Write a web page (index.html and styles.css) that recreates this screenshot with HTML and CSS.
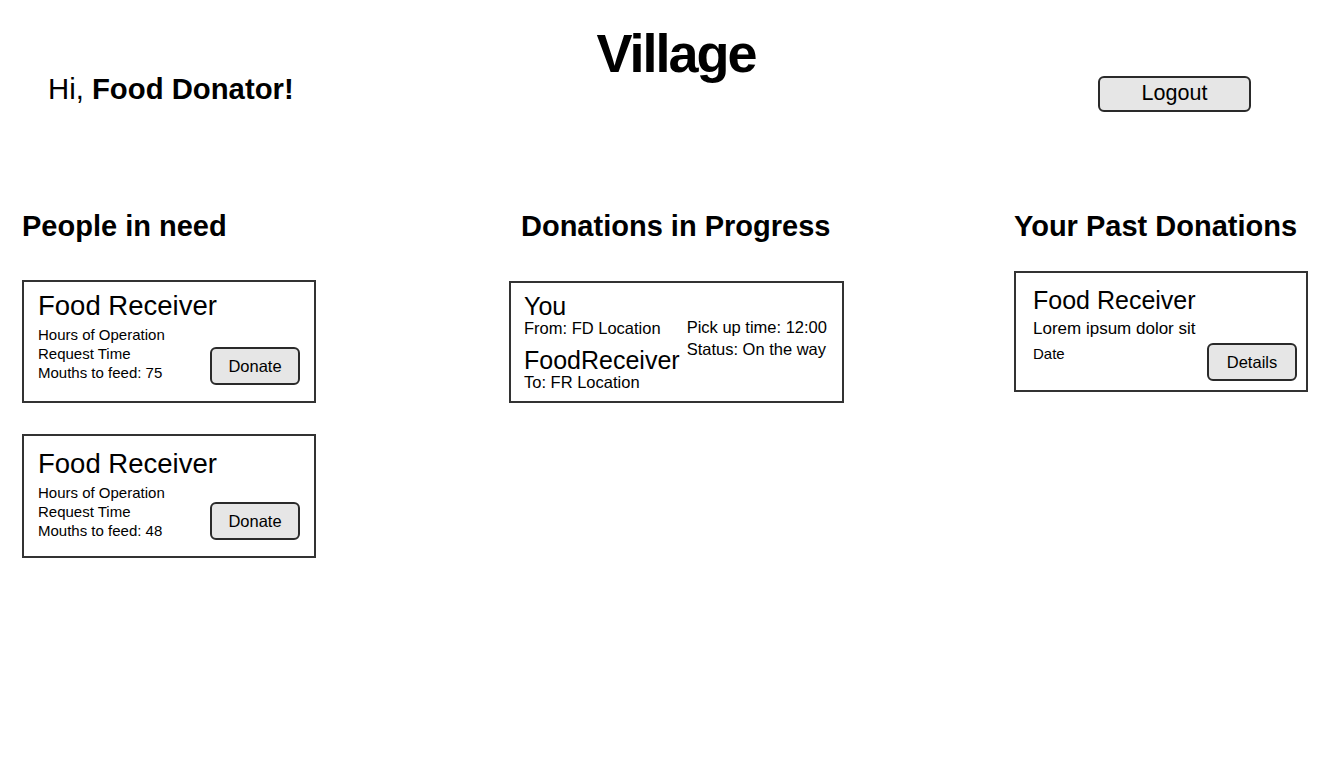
FILE: index.html
```html
<!DOCTYPE html>
<html lang="en">
<head>
<meta charset="utf-8">
<title>Village</title>
<link rel="stylesheet" href="styles.css">
</head>
<body>
<div class="page">
  <header class="header">
    <div class="greeting">Hi, <strong>Food Donator!</strong></div>
    <h1 class="brand">Village</h1>
    <div class="header-actions">
      <button class="btn btn-logout" type="button">Logout</button>
    </div>
  </header>

  <main class="columns">
    <section class="column column-need">
      <h2 class="column-title">People in need</h2>
      <div class="card-list">
        <div class="card card-need">
          <div class="card-info">
            <div class="card-title">Food Receiver</div>
            <div class="small-line">Hours of Operation</div>
            <div class="small-line">Request Time</div>
            <div class="small-line">Mouths to feed: 75</div>
          </div>
          <button class="btn btn-card" type="button">Donate</button>
        </div>
        <div class="card card-need card-need-alt">
          <div class="card-info">
            <div class="card-title">Food Receiver</div>
            <div class="small-line">Hours of Operation</div>
            <div class="small-line">Request Time</div>
            <div class="small-line">Mouths to feed: 48</div>
          </div>
          <button class="btn btn-card" type="button">Donate</button>
        </div>
      </div>
    </section>

    <section class="column column-progress">
      <h2 class="column-title column-title-inset">Donations in Progress</h2>
      <div class="card card-progress">
        <div class="progress-parties">
          <div class="party">
            <div class="party-name">You</div>
            <div class="mid-line">From: FD Location</div>
          </div>
          <div class="party party-second">
            <div class="party-name">FoodReceiver</div>
            <div class="mid-line">To: FR Location</div>
          </div>
        </div>
        <div class="progress-status">
          <div class="status-line">Pick up time: 12:00</div>
          <div class="status-line">Status: On the way</div>
        </div>
      </div>
    </section>

    <section class="column column-past">
      <h2 class="column-title column-title-tight">Your Past Donations</h2>
      <div class="card card-past">
        <div class="card-info past-info">
          <div class="past-title">Food Receiver</div>
          <div class="past-line">Lorem ipsum dolor sit</div>
          <div class="past-date">Date</div>
        </div>
        <button class="btn btn-card" type="button">Details</button>
      </div>
    </section>
  </main>
</div>
</body>
</html>
```

FILE: styles.css
```css
* {
  box-sizing: border-box;
}

html, body {
  margin: 0;
  padding: 0;
  background: #ffffff;
}

body {
  font-family: "Liberation Sans", Arial, Helvetica, sans-serif;
  color: #000000;
}

.page {
  width: 1340px;
  height: 764px;
  overflow: hidden;
}

/* Header */
.header {
  display: grid;
  grid-template-columns: 1fr auto 1fr;
  align-items: start;
  padding-left: 12px;
  height: 112px;
}

.greeting {
  margin-top: 72px;
  padding-left: 36px;
  font-size: 29.3px;
  line-height: 34px;
  white-space: nowrap;
}

.greeting strong {
  font-weight: 700;
}

.brand {
  margin: 26px 0 0 0;
  font-size: 54px;
  line-height: 54px;
  font-weight: 700;
  letter-spacing: -2px;
}

.header-actions {
  display: flex;
  justify-content: flex-end;
  padding-right: 89px;
}

.btn {
  font-family: "Liberation Sans", Arial, Helvetica, sans-serif;
  background: #e6e6e6;
  border: 2px solid #2a2a2a;
  border-radius: 6px;
  color: #000000;
  padding: 0;
  cursor: pointer;
}

.btn-logout {
  margin-top: 76px;
  width: 153px;
  height: 36px;
  font-size: 21.5px;
  line-height: 1;
  padding-bottom: 1px;
}

/* Columns */
.columns {
  display: grid;
  grid-template-columns: 487px 505px 1fr;
  align-items: start;
  padding: 98px 0 0 22px;
}

.column-title {
  margin: 0 0 38px 0;
  font-size: 29px;
  line-height: 32px;
  font-weight: 700;
  white-space: nowrap;
}

.column-title-inset {
  padding-left: 12px;
  margin-bottom: 39px;
}

.column-title-tight {
  margin-bottom: 29px;
}

.card-list {
  display: flex;
  flex-direction: column;
  gap: 31px;
}

.card {
  border: 2px solid #333333;
  background: #ffffff;
  display: flex;
}

.card-info {
  flex: 1 1 auto;
  min-width: 0;
}

/* People in need cards */
.card-need {
  width: 294px;
  padding: 8px 14px 16px 14px;
  justify-content: space-between;
  align-items: flex-end;
}

.card-need .card-info {
  padding-bottom: 3px;
}

.card-need-alt {
  padding-top: 12px;
}

.card-need-alt .card-info {
  padding-bottom: 0;
}

.card-title {
  font-size: 27.5px;
  line-height: 32px;
  margin-bottom: 3px;
  white-space: nowrap;
}

.small-line {
  font-size: 15px;
  line-height: 19px;
  white-space: nowrap;
}

.btn-card {
  width: 90px;
  height: 38px;
  font-size: 16.5px;
  line-height: 1;
  flex-shrink: 0;
}

/* Donations in progress card */
.card-progress {
  width: 335px;
  padding: 12px 8px 9px 13px;
  gap: 7px;
}

.party-name {
  font-size: 25px;
  line-height: 23px;
  white-space: nowrap;
}

.party-second {
  margin-top: 11px;
}

.mid-line {
  font-size: 16.5px;
  line-height: 20px;
  white-space: nowrap;
}

.progress-status {
  margin-top: 21px;
}

.status-line {
  font-size: 16.5px;
  line-height: 22px;
  white-space: nowrap;
}

/* Past donations card */
.card-past {
  width: 294px;
  padding: 12px 9px 9px 17px;
  justify-content: space-between;
  align-items: flex-end;
}

.past-info {
  padding-bottom: 16px;
}

.past-title {
  font-size: 25px;
  line-height: 30px;
  margin-bottom: 3px;
  white-space: nowrap;
}

.past-line {
  font-size: 17px;
  line-height: 22px;
  margin-bottom: 3px;
  white-space: nowrap;
}

.past-date {
  font-size: 15px;
  line-height: 22px;
}
```
